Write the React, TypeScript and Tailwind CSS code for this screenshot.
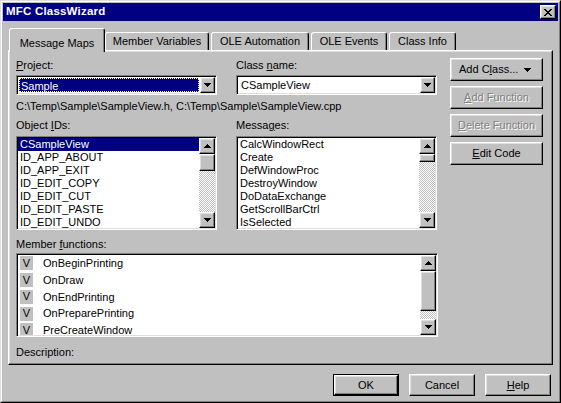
import React from "react";

const raised =
  "border border-t-white border-l-white border-r-black border-b-black shadow-[inset_-1px_-1px_0_#808080,inset_1px_1px_0_#dfdfdf] bg-[#c0c0c0]";
const sunken =
  "border border-t-[#808080] border-l-[#808080] border-r-white border-b-white shadow-[inset_1px_1px_0_#000,inset_-1px_-1px_0_#dfdfdf] p-px";
const dither =
  "bg-[image:repeating-conic-gradient(#c0c0c0_0_25%,#ffffff_0_50%)] bg-[length:2px_2px]";

function Arrow({ up = false }: { up?: boolean }) {
  return (
    <svg width="7" height="4" viewBox="0 0 7 4" shapeRendering="crispEdges">
      {up ? (
        <path d="M3 0h1v1h1v1h1v1h1v1H0V3h1V2h1V1h1z" fill="#000" />
      ) : (
        <path d="M0 0h7v1H6v1H5v1H4v1H3V3H2V2H1V1H0z" fill="#000" />
      )}
    </svg>
  );
}

function ArrowButton({ up = false }: { up?: boolean }) {
  return (
    <div className={`${raised} w-[16px] h-[16px] shrink-0 flex items-center justify-center`}>
      <Arrow up={up} />
    </div>
  );
}

function Scrollbar({ thumb }: { thumb: number }) {
  return (
    <div className="w-[16px] h-full flex flex-col">
      <ArrowButton up />
      <div className={`${raised} w-[16px] shrink-0`} style={{ height: thumb }} />
      <div className={`flex-1 ${dither}`} />
      <ArrowButton />
    </div>
  );
}

function Combo({ value, focused = false }: { value: string; focused?: boolean }) {
  return (
    <div className={`${sunken} h-[20px] mt-[3px]`}>
      <div className="h-full bg-white flex">
        <div className="flex-1 p-px">
          {focused ? (
            <div className="h-full bg-[#000080] text-white border border-dotted border-[#ffff80] pl-[1px] leading-[14px]">
              {value}
            </div>
          ) : (
            <div className="h-full pl-[2px] leading-[14px] text-black">{value}</div>
          )}
        </div>
        <div className={`${raised} w-[15px] h-full flex items-center justify-center`}>
          <Arrow />
        </div>
      </div>
    </div>
  );
}

function ListBox({ items, selected, thumb }: { items: string[]; selected?: number; thumb: number }) {
  return (
    <div className={`${sunken} h-[94px] mt-[4px]`}>
      <div className="h-full bg-white flex">
        <div className="flex-1 overflow-hidden">
          {items.map((item, i) => (
            <div
              key={item}
              className={`h-[13px] leading-[13px] pl-[2px] ${
                i === selected ? "bg-[#000080] text-white" : "text-black"
              }`}
            >
              {item}
            </div>
          ))}
        </div>
        <Scrollbar thumb={thumb} />
      </div>
    </div>
  );
}

function SideButton({ children, disabled = false }: { children: React.ReactNode; disabled?: boolean }) {
  return (
    <div
      className={`${raised} h-[23px] w-[93px] flex items-center justify-center ${
        disabled ? "text-[#808080] [text-shadow:1px_1px_0_#fff]" : "text-black"
      }`}
    >
      {children}
    </div>
  );
}

function DialogButton({ children, isDefault = false }: { children: React.ReactNode; isDefault?: boolean }) {
  if (isDefault) {
    return (
      <div className="border border-black w-[66px] h-[22px]">
        <div className={`${raised} h-full flex items-center justify-center`}>{children}</div>
      </div>
    );
  }
  return (
    <div className={`${raised} w-[66px] h-[22px] flex items-center justify-center`}>{children}</div>
  );
}

const tabs = [
  { label: "Member Variables", w: "w-[104px]" },
  { label: "OLE Automation", w: "w-[98px] ml-[2px]" },
  { label: "OLE Events", w: "w-[76px] ml-[2px]" },
  { label: "Class Info", w: "w-[67px] ml-[2px]" },
];

const members = ["OnBeginPrinting", "OnDraw", "OnEndPrinting", "OnPreparePrinting", "PreCreateWindow"];

export default function App() {
  return (
    <div className="w-[561px] h-[403px] bg-[#c0c0c0] border border-t-[#dfdfdf] border-l-[#dfdfdf] border-r-black border-b-black font-['Liberation_Sans',Arial,sans-serif] text-[11px] text-black select-none">
      <div className="h-full border border-t-white border-l-white border-r-[#808080] border-b-[#808080] p-px flex flex-col">
        {/* title bar */}
        <div className="h-[18px] bg-[#000080] flex items-center justify-between pl-[3px] pr-[2px]">
          <span className="text-white font-bold text-[11.5px] tracking-[0.2px]">MFC ClassWizard</span>
          <div className={`${raised} w-[16px] h-[14px] flex items-center justify-center`}>
            <svg width="8" height="7" viewBox="0 0 8 7" shapeRendering="crispEdges">
              <path
                d="M0 0h2v1h1v1h2V1h1V0h2v1H7v1H6v1H5v1h1v1h1v1h1v1H6V6H5V5H3v1H2v1H0V6h1V5h1V4h1V3H2V2H1V1H0z"
                fill="#000"
              />
            </svg>
          </div>
        </div>

        {/* tabs */}
        <div className="mt-[7px] ml-[6px] h-[22px] flex items-end">
          <div className="relative z-10 -mb-[2px] w-[96px] h-[24px] bg-[#c0c0c0] border-t border-l border-r border-t-white border-l-white border-r-black rounded-t-[3px] shadow-[inset_-1px_0_0_#808080] flex justify-center pt-[6px]">
            Message Maps
          </div>
          {tabs.map((t) => (
            <div
              key={t.label}
              className={`${t.w} h-[18px] border-t border-l border-r border-t-white border-l-white border-r-black rounded-t-[3px] shadow-[inset_-1px_0_0_#808080] flex items-center justify-center`}
            >
              {t.label}
            </div>
          ))}
        </div>

        {/* tab page */}
        <div className="ml-[5px] w-[545px] h-[315px] border border-t-white border-l-white border-r-black border-b-black shadow-[inset_-1px_-1px_0_#808080,inset_1px_1px_0_#dfdfdf] pl-[7px] pt-[8px] flex">
          <div className="w-[422px] flex flex-col">
            <div className="grid grid-cols-[201px_201px] gap-x-[19px]">
              <div>
                <div className="h-[13px] leading-[13px]">
                  <u>P</u>roject:
                </div>
                <Combo value="Sample" focused />
              </div>
              <div>
                <div className="h-[13px] leading-[13px]">
                  Class <u>n</u>ame:
                </div>
                <Combo value="CSampleView" />
              </div>
            </div>

            <div className="mt-[5px] h-[13px] leading-[13px] whitespace-nowrap">
              C:\Temp\Sample\SampleView.h, C:\Temp\Sample\SampleView.cpp
            </div>

            <div className="mt-[6px] grid grid-cols-[201px_201px] gap-x-[19px]">
              <div>
                <div className="h-[13px] leading-[13px]">
                  Object <u>I</u>Ds:
                </div>
                <ListBox
                  items={[
                    "CSampleView",
                    "ID_APP_ABOUT",
                    "ID_APP_EXIT",
                    "ID_EDIT_COPY",
                    "ID_EDIT_CUT",
                    "ID_EDIT_PASTE",
                    "ID_EDIT_UNDO",
                  ]}
                  selected={0}
                  thumb={17}
                />
              </div>
              <div>
                <div className="h-[13px] leading-[13px]">
                  Messa<u>g</u>es:
                </div>
                <ListBox
                  items={[
                    "CalcWindowRect",
                    "Create",
                    "DefWindowProc",
                    "DestroyWindow",
                    "DoDataExchange",
                    "GetScrollBarCtrl",
                    "IsSelected",
                  ]}
                  thumb={8}
                />
              </div>
            </div>

            <div className="mt-[8px] h-[13px] leading-[13px]">
              Member <u>f</u>unctions:
            </div>
            <div className={`${sunken} mt-[2px] h-[84px]`}>
              <div className="h-full bg-white flex">
                <div className="flex-1 overflow-hidden">
                  {members.map((m) => (
                    <div key={m} className="h-[16.75px] flex items-center">
                      <div className="ml-[2px] w-[13px] h-[14px] bg-[#c0c0c0] flex items-center justify-center leading-none">
                        V
                      </div>
                      <span className="ml-[10px]">{m}</span>
                    </div>
                  ))}
                </div>
                <Scrollbar thumb={40} />
              </div>
            </div>

            <div className="mt-[9px] h-[13px] leading-[13px]">Description:</div>
          </div>

          <div className="ml-[12px] -mt-[1px] flex flex-col gap-[5px]">
            <div className={`${raised} h-[23px] w-[93px] flex items-center justify-between pl-[8px] pr-[11px]`}>
              <span>
                Add C<u>l</u>ass...
              </span>
              <Arrow />
            </div>
            <SideButton disabled>
              <span>
                <u>A</u>dd Function
              </span>
            </SideButton>
            <SideButton disabled>
              <span>
                <u>D</u>elete Function
              </span>
            </SideButton>
            <SideButton>
              <span>
                <u>E</u>dit Code
              </span>
            </SideButton>
          </div>
        </div>

        {/* dialog buttons */}
        <div className="mt-[9px] pr-[7px] flex justify-end gap-[10px]">
          <DialogButton isDefault>OK</DialogButton>
          <DialogButton>Cancel</DialogButton>
          <DialogButton>
            <span>
              <u>H</u>elp
            </span>
          </DialogButton>
        </div>
      </div>
    </div>
  );
}
